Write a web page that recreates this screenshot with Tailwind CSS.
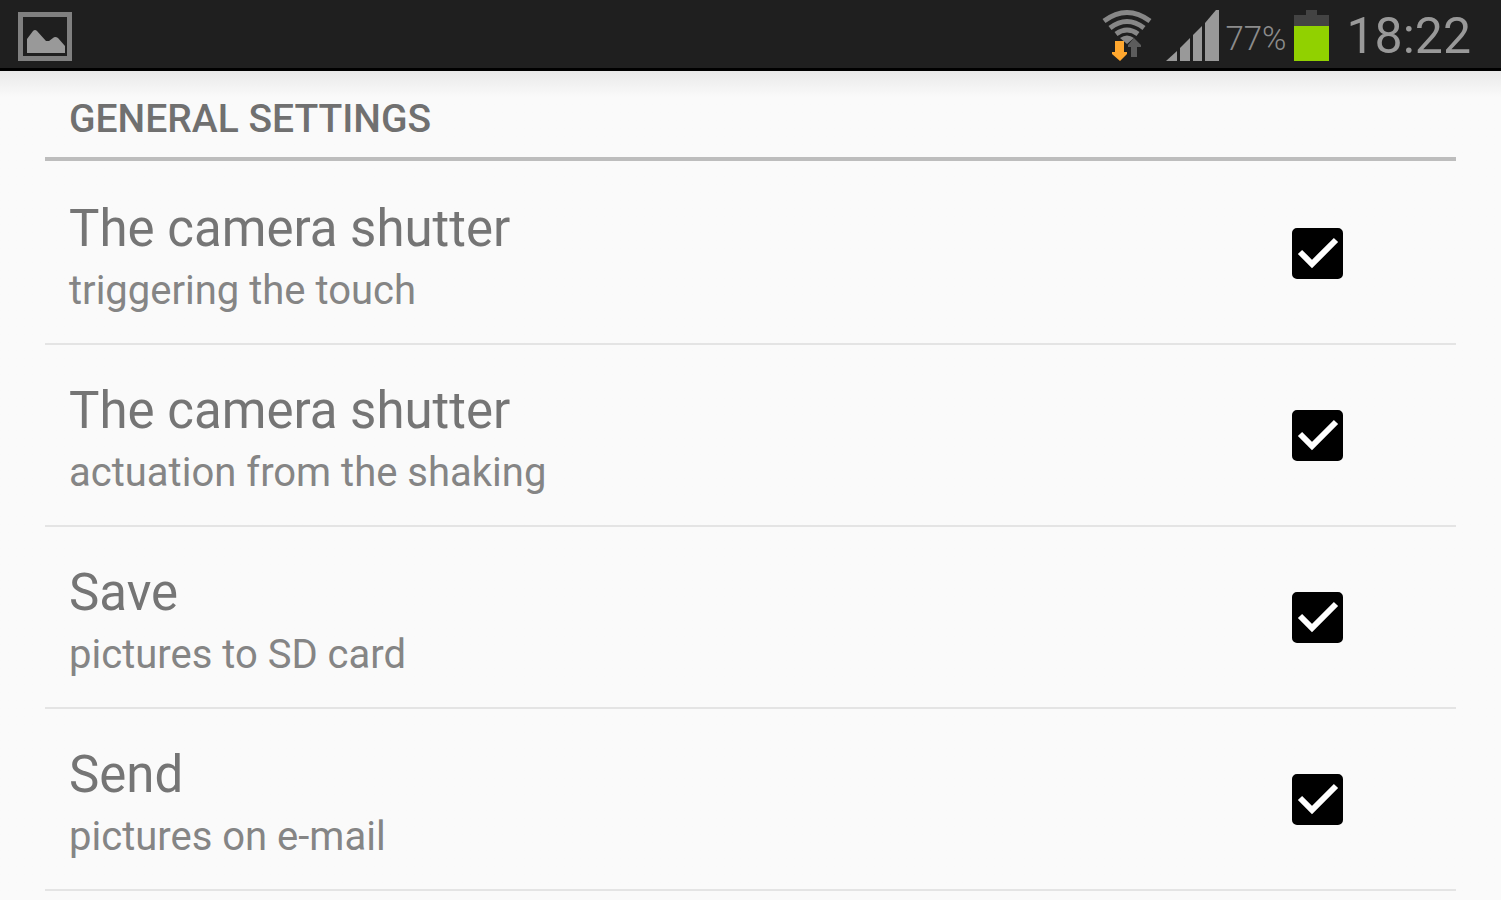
<!DOCTYPE html>
<html lang="en">
<head>
  <meta charset="UTF-8">
  <meta name="viewport" content="width=device-width, initial-scale=1.0">
  <title>General settings</title>
  <script src="https://cdn.jsdelivr.net/npm/@tailwindcss/browser@4"></script>
</head>
<body class="bg-[#fafafa] font-['Roboto',sans-serif] h-screen overflow-hidden">
  <!-- Status bar -->
  <header class="bg-[#1f1f1f] h-[71px] border-b-3 border-black flex items-center justify-between pl-[18px] pr-[30px] text-[#999999]">
    <svg class="w-[54px] h-[49px] mt-1" viewBox="0 0 54 49" fill="none" aria-label="Picture saved">
      <path d="M0 0H54V49H0ZM5 5V44H49V5Z" fill="#808080" fill-rule="evenodd"/>
      <path d="M9 41V27L15 19Q17 17 19 19L28 29H31L35 26Q37 24 40 26L47 34V41Z" fill="#999"/>
    </svg>

    <div class="flex items-center pt-1">
      <svg class="w-[52px] h-[54px]" viewBox="0 0 52 54" fill="none" aria-label="Wi-Fi">
        <g stroke="#878787" stroke-width="5">
          <path d="M3 12Q26 -5 49 12"/>
          <path d="M9 19Q26 6 43 19"/>
          <path d="M15 25Q26 17 37 25"/>
        </g>
        <path d="M19 29Q26 24 33 29L26 35Z" fill="#878787"/>
        <path d="M33 29L40 36V38H36V48H30V38H27V36Z" fill="#5c5c5c"/>
        <path d="M14 32H23V43H26V45L19 52L11 45V43H14Z" fill="#ffa72e"/>
      </svg>
      <svg class="w-[56px] h-[54px] ml-3" viewBox="0 0 56 54" fill="#999" aria-label="Signal">
        <path d="M1 52L12 42V52Z"/>
        <path d="M15 39L25 29V52H15Z"/>
        <path d="M28 26L37 17V52H28Z"/>
        <path d="M40 14L51 1H54V52H40Z"/>
      </svg>
      <span class="text-[33px] leading-none mt-1 ml-1 text-[#8c8c8c] font-light">77%</span>
      <svg class="w-[36px] h-[54px] ml-2" viewBox="0 0 36 54" aria-label="Battery">
        <path d="M0 6H12V1H23V6H35V20H0Z" fill="#434343"/>
        <path d="M0 17H35V52H0Z" fill="#91d100"/>
      </svg>
      <span class="text-[50px] leading-none ml-4">18:22</span>
    </div>
  </header>

  <main class="px-[45px] bg-linear-to-b from-[#e9e9e9] to-[#fafafa] to-[26px]">
    <h1 class="h-[90px] mb-0.5 pt-7 pl-6 border-b-4 border-[#bdbdbd] text-[39px] leading-10 font-medium text-[#707070]">GENERAL SETTINGS</h1>

    <ul>
      <li class="border-b-2 border-[#e4e4e4]">
        <label for="touch" class="h-[180px] flex items-center justify-between pl-6 pr-[113px]">
          <span class="pt-2">
            <span class="block text-[51px] leading-[68px] text-[#757575]">The camera shutter</span>
            <span class="block text-[40px] leading-[56px] text-[#858585]">triggering the touch</span>
          </span>
          <span class="grid">
            <input type="checkbox" id="touch" checked class="peer appearance-none col-start-1 row-start-1 size-[51px] rounded-[5px] border-4 border-black checked:bg-black">
            <svg class="hidden peer-checked:block col-start-1 row-start-1 size-[51px] pointer-events-none" viewBox="0 0 51 51" fill="none" stroke="#fff" stroke-width="6"><path d="M8 24L20 36L44 12"/></svg>
          </span>
        </label>
      </li>
      <li class="border-b-2 border-[#e4e4e4]">
        <label for="shake" class="h-[180px] flex items-center justify-between pl-6 pr-[113px]">
          <span class="pt-2">
            <span class="block text-[51px] leading-[68px] text-[#757575]">The camera shutter</span>
            <span class="block text-[40px] leading-[56px] text-[#858585]">actuation from the shaking</span>
          </span>
          <span class="grid">
            <input type="checkbox" id="shake" checked class="peer appearance-none col-start-1 row-start-1 size-[51px] rounded-[5px] border-4 border-black checked:bg-black">
            <svg class="hidden peer-checked:block col-start-1 row-start-1 size-[51px] pointer-events-none" viewBox="0 0 51 51" fill="none" stroke="#fff" stroke-width="6"><path d="M8 24L20 36L44 12"/></svg>
          </span>
        </label>
      </li>
      <li class="border-b-2 border-[#e4e4e4]">
        <label for="save" class="h-[180px] flex items-center justify-between pl-6 pr-[113px]">
          <span class="pt-2">
            <span class="block text-[51px] leading-[68px] text-[#757575]">Save</span>
            <span class="block text-[40px] leading-[56px] text-[#858585]">pictures to SD card</span>
          </span>
          <span class="grid">
            <input type="checkbox" id="save" checked class="peer appearance-none col-start-1 row-start-1 size-[51px] rounded-[5px] border-4 border-black checked:bg-black">
            <svg class="hidden peer-checked:block col-start-1 row-start-1 size-[51px] pointer-events-none" viewBox="0 0 51 51" fill="none" stroke="#fff" stroke-width="6"><path d="M8 24L20 36L44 12"/></svg>
          </span>
        </label>
      </li>
      <li class="border-b-2 border-[#e4e4e4]">
        <label for="send" class="h-[180px] flex items-center justify-between pl-6 pr-[113px]">
          <span class="pt-2">
            <span class="block text-[51px] leading-[68px] text-[#757575]">Send</span>
            <span class="block text-[40px] leading-[56px] text-[#858585]">pictures on e-mail</span>
          </span>
          <span class="grid">
            <input type="checkbox" id="send" checked class="peer appearance-none col-start-1 row-start-1 size-[51px] rounded-[5px] border-4 border-black checked:bg-black">
            <svg class="hidden peer-checked:block col-start-1 row-start-1 size-[51px] pointer-events-none" viewBox="0 0 51 51" fill="none" stroke="#fff" stroke-width="6"><path d="M8 24L20 36L44 12"/></svg>
          </span>
        </label>
      </li>
    </ul>
  </main>
</body>
</html>
